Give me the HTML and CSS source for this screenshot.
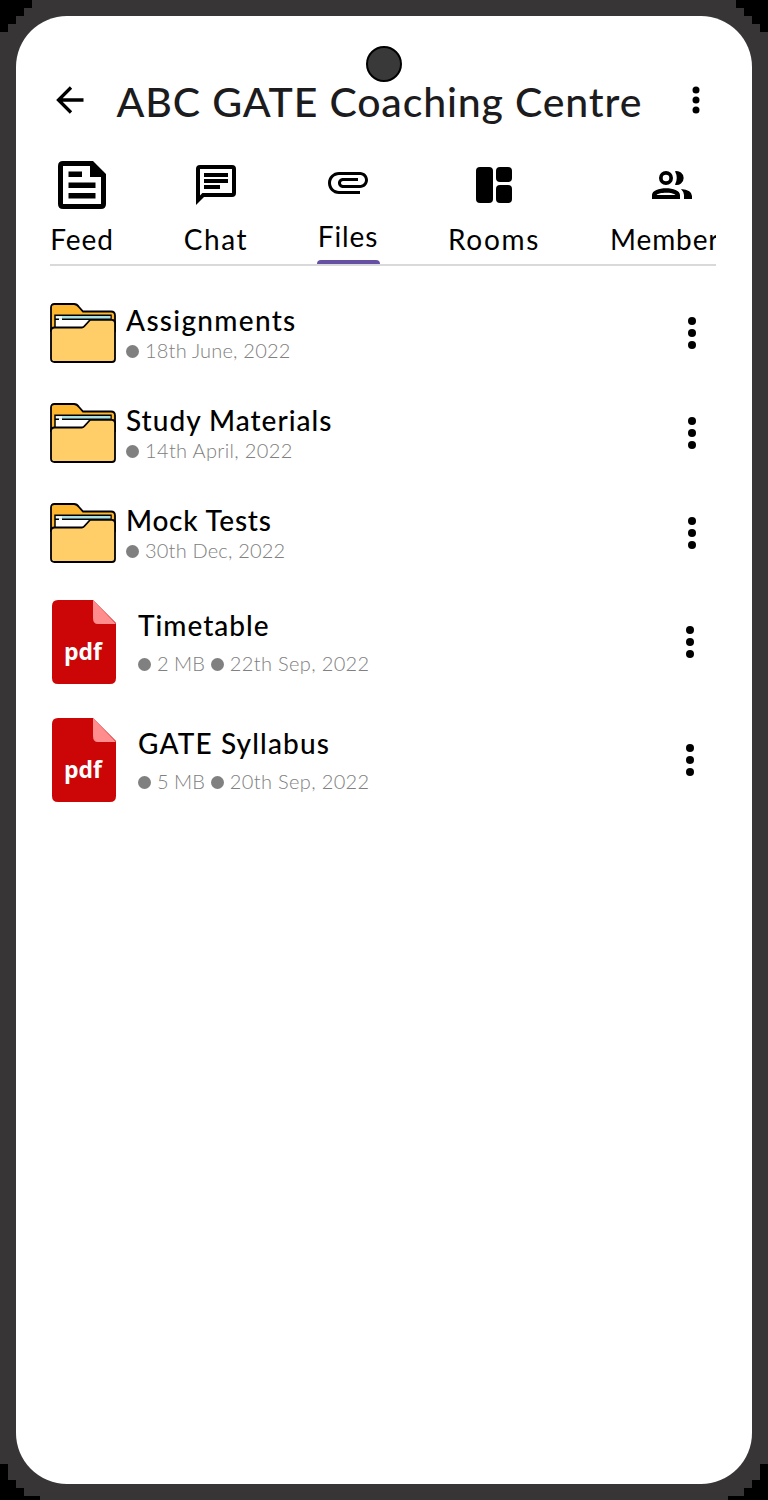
FILE: index.html
```html
<!DOCTYPE html>
<html lang="en">
<head>
<meta charset="utf-8">
<title>ABC GATE Coaching Centre</title>
<link rel="stylesheet" href="styles.css">
</head>
<body>
<svg class="defs" aria-hidden="true">
  <symbol id="dots" viewBox="0 0 8 32"><circle cx="4" cy="4" r="4"/><circle cx="4" cy="16" r="4"/><circle cx="4" cy="28" r="4"/></symbol>
  <symbol id="folder" viewBox="0 0 66 60">
    <path d="M1 28V4.500Q1 1 4.500 1H24Q27 1 29 4L33 8.500H61Q65 8.500 65 12.500V28Z" fill="#fdb62f" stroke="#000" stroke-width="1.800"/>
    <path d="M5 26V12.300H61V26Z" fill="#fff" stroke="#000" stroke-width="1.500"/>
    <path d="M6 13H60.300V16H6Z" fill="#a9e3e8"/>
    <path d="M6 14.500H12" stroke="#fff" stroke-width="2"/>
    <path d="M5 16.200H9M12 16.200H61" stroke="#000" stroke-width="1.500"/>
    <path d="M1 28Q1 24.500 4.500 24.500H32Q33.500 24.500 35 22.500L39.500 17.500Q40 17 42 17H62Q65 17 65 20V56Q65 59 62 59H4.500Q1 59 1 55.500Z" fill="#ffce69"/>
    <path d="M40 16.800H62Q65 17 65 20V56Q65 59 62 59H4.500Q1 59 1 55.500V28Q1 24.500 4.500 24.500H32Q33.500 24.500 35 22.500L40 17" fill="none" stroke="#000" stroke-width="1.800"/>
  </symbol>
</svg>
<div class="phone">
  <main class="screen">
    <span class="camera"></span>
    <header class="bar">
      <svg class="back" viewBox="0 0 28 28"><path d="M27.500 14H3M15 1.500L2.500 14L15 26.500" fill="none" stroke="#000" stroke-width="3.300"/></svg>
      <h1 class="title">ABC GATE Coaching Centre</h1>
      <svg class="bar-menu" viewBox="0 0 8 28"><circle cx="4" cy="4" r="3.500"/><circle cx="4" cy="14" r="3.500"/><circle cx="4" cy="24" r="3.500"/></svg>
    </header>
    <nav class="tabs">
      <a class="tab feed"><svg class="icon" viewBox="0 0 48 48"><path fill-rule="evenodd" d="M5 0H35L48 13V43Q48 48 43 48H5Q0 48 0 43V5Q0 0 5 0ZM5 5V43H43V16H32V5ZM10.500 10.500H24V16H10.500ZM10.500 21.500H37.500V27H10.500ZM10.500 32H37.500V37.500H10.500Z"/></svg><span class="label">Feed</span></a>
      <a class="tab chat"><svg class="icon" viewBox="0 0 48 48"><path fill-rule="evenodd" d="M8 4H40Q44 4 44 8V32Q44 36 40 36H12L4 44V8Q4 4 8 4ZM8 8V34.400L10.400 32H40V8ZM12 12H36V16H12ZM12 18H36V22H12ZM12 24H28V28H12Z"/></svg><span class="label">Chat</span></a>
      <a class="tab files"><svg class="icon" viewBox="0 0 24 24"><path d="M2 12.500C2 9.460 4.460 7 7.500 7H18c2.210 0 4 1.790 4 4s-1.790 4-4 4H9.500C8.120 15 7 13.880 7 12.500S8.120 10 9.500 10H17v1.500H9.500c-.55 0-1 .45-1 1s.45 1 1 1H18c1.380 0 2.500-1.120 2.500-2.500S19.380 8.500 18 8.500H7.500c-2.210 0-4 1.790-4 4s1.790 4 4 4H18V18H7.500C4.460 18 2 15.540 2 12.500z"/></svg><span class="label">Files</span></a>
      <a class="tab rooms"><svg class="icon" viewBox="0 0 48 48"><rect x="6" y="6" width="17" height="36" rx="4"/><rect x="26" y="6" width="16" height="15" rx="4"/><rect x="26" y="24" width="16" height="18" rx="4"/></svg><span class="label">Rooms</span></a>
      <a class="tab members"><svg class="icon" viewBox="0 0 48 48"><path fill-rule="evenodd" d="M18 10A7 7 0 1 1 18 24A7 7 0 1 1 18 10ZM18 13.700A3.300 3.300 0 1 0 18 20.300A3.300 3.300 0 1 0 18 13.700ZM4 38V34C4 25 32 25 32 34V38ZM8.500 34H27.500C25 31 11 31 8.500 34ZM27 10.200A7 7 0 1 1 27 23.800Q30.500 17 27 10.200ZM33 28Q44 29 44 35V38H36V34Q36 31 33 28Z"/></svg><span class="label">Members</span></a>
    </nav>
    <section class="list">
      <article class="row"><svg class="folder"><use href="#folder"/></svg><div class="text"><h2 class="name n1">Assignments</h2><p class="meta m1"><i class="dot"></i><span>18th June, 2022</span></p></div><svg class="menu"><use href="#dots"/></svg></article>
      <article class="row"><svg class="folder"><use href="#folder"/></svg><div class="text"><h2 class="name n2">Study Materials</h2><p class="meta m2"><i class="dot"></i><span>14th April, 2022</span></p></div><svg class="menu"><use href="#dots"/></svg></article>
      <article class="row"><svg class="folder"><use href="#folder"/></svg><div class="text"><h2 class="name n3">Mock Tests</h2><p class="meta m3"><i class="dot"></i><span>30th Dec, 2022</span></p></div><svg class="menu"><use href="#dots"/></svg></article>
      <article class="row pdf"><div class="doc"><svg class="sheet" viewBox="0 0 64 84"><path d="M6 0H41L64 23V78Q64 84 58 84H6Q0 84 0 78V6Q0 0 6 0Z" fill="#cc0606"/><path d="M41 0L64 24H46Q41 24 41 18Z" fill="#ff8d8d"/></svg><span class="ext">pdf</span></div><div class="text"><h2 class="name n4">Timetable</h2><p class="meta"><i class="dot"></i><span class="size">2 MB</span><i class="dot"></i><span class="date">22th Sep, 2022</span></p></div><svg class="menu"><use href="#dots"/></svg></article>
      <article class="row pdf"><div class="doc"><svg class="sheet" viewBox="0 0 64 84"><path d="M6 0H41L64 23V78Q64 84 58 84H6Q0 84 0 78V6Q0 0 6 0Z" fill="#cc0606"/><path d="M41 0L64 24H46Q41 24 41 18Z" fill="#ff8d8d"/></svg><span class="ext">pdf</span></div><div class="text"><h2 class="name n5">GATE Syllabus</h2><p class="meta"><i class="dot"></i><span class="size">5 MB</span><i class="dot"></i><span class="date">20th Sep, 2022</span></p></div><svg class="menu"><use href="#dots"/></svg></article>
    </section>
  </main>
</div>
</body>
</html>
```
FILE: styles.css
```css
* { box-sizing: border-box; }
body { margin: 0; background: #000; font-family: Lato, sans-serif; color: #000; }
h1, h2, p { margin: 0; white-space: nowrap; }
.defs { display: none; }
.phone {
  width: 768px; height: 1500px; padding: 16px; background: #383536;
  clip-path: polygon(32px 0, 736px 0, 736px 8px, 744px 8px, 744px 16px, 752px 16px, 752px 24px, 760px 24px, 760px 32px, 768px 32px,
    768px 1464px, 760px 1464px, 760px 1480px, 752px 1480px, 752px 1488px, 744px 1488px, 744px 1496px, 728px 1496px, 728px 1500px,
    40px 1500px, 40px 1496px, 24px 1496px, 24px 1488px, 16px 1488px, 16px 1480px, 8px 1480px, 8px 1464px, 0 1464px,
    0 32px, 8px 32px, 8px 24px, 16px 24px, 16px 16px, 24px 16px, 24px 8px, 32px 8px);
}
.screen { position: relative; height: 1468px; border-radius: 51px; background: #fff; padding: 61px 36px 0 34px; }
.camera { position: absolute; left: 350px; top: 30px; width: 36px; height: 36px; border-radius: 50%; background: #3a3939; border: 2px solid #000; }
.bar { display: flex; height: 51px; padding: 0 16px 0 6px; align-items: flex-start; }
.back { width: 28px; height: 28px; margin-top: 9px; flex: none; }
.title { margin-left: 32.500px; font-size: 41px; line-height: 50px; font-weight: 500; letter-spacing: .850px; color: #1c1b1d; }
.bar-menu { width: 8px; height: 28px; margin: 9px 0 0 auto; flex: none; }
.tabs { display: flex; height: 138px; padding-top: 33px; overflow: hidden; border-bottom: 2px solid #d9d9db; }
.tab { flex: none; display: flex; flex-direction: column; align-items: center; }
.icon { width: 48px; height: 48px; }
.label { margin-top: 13px; font-size: 28px; line-height: 34px; white-space: nowrap; letter-spacing: .900px; }
.feed { width: 64px; }
.chat { width: 64px; margin-left: 70px; }
.chat .label { letter-spacing: 1.600px; }
.files { width: 62px; margin-left: 69px; margin-top: -3px; }
.files::after { content: ""; width: 63px; height: 4px; border-radius: 4px 4px 0 0; background: #6650a4; margin-top: 7px; }
.rooms { width: 92px; margin-left: 69px; }
.rooms .label { letter-spacing: 1.700px; }
.members { width: 124px; margin-left: 70px; }
.members .label { align-self: flex-start; }
.list { padding-top: 36px; }
.row { display: flex; height: 100px; padding-right: 20px; }
.folder { width: 66px; height: 62px; flex: none; }
.menu { width: 8px; height: 32px; margin: 15px 0 0 auto; flex: none; }
.text { margin-left: 10px; padding-top: 1px; }
.name { font-size: 28px; line-height: 34px; font-weight: 500; letter-spacing: 1px; }
.n1 { letter-spacing: 1.300px; }
.n3 { letter-spacing: .750px; }
.n5 { letter-spacing: 1.150px; }
.meta { display: flex; align-items: center; font-size: 20px; line-height: 26px; font-weight: 300; color: #808080; letter-spacing: .200px; }
.m2 { letter-spacing: .350px; }
.dot { width: 13px; height: 13px; margin-top: 3px; margin-right: 6px; border-radius: 50%; background: #808080; }
.size { margin-right: 6px; letter-spacing: 0; }
.date { letter-spacing: .350px; }
.pdf { height: 118px; padding-left: 2px; padding-right: 22px; }
.pdf:nth-of-type(4) { margin-top: -2px; }
.pdf .text { margin-left: 22px; padding-top: 8px; }
.pdf .meta { margin-top: 8px; }
.pdf .menu { margin-top: 26px; }
.doc { display: grid; width: 64px; height: 84px; }
.sheet { grid-area: 1 / 1; width: 64px; height: 84px; }
.ext { grid-area: 1 / 1; padding: 34px 2px 0 0; text-align: center; color: #fff; font: 700 23px/34px "Open Sans", sans-serif; }
```
